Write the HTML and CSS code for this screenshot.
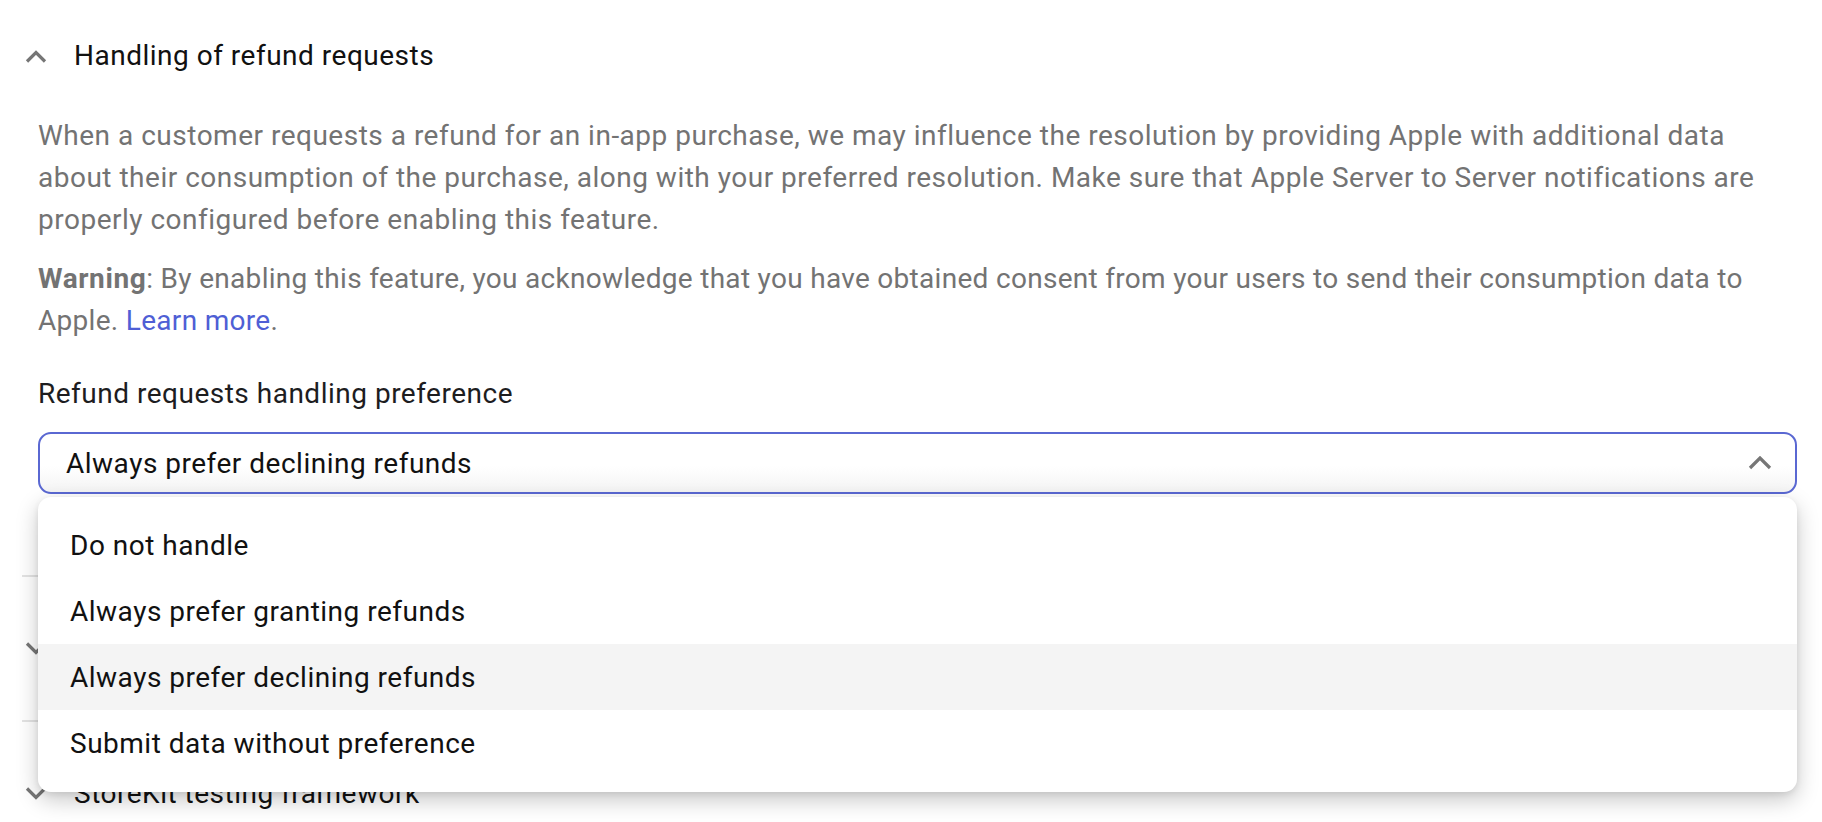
FILE: index.html
```html
<!DOCTYPE html>
<html lang="en">
<head>
<meta charset="utf-8">
<title>Refund requests</title>
<link rel="stylesheet" href="styles.css">
</head>
<body>
<div class="accordion">
  <section class="item open">
    <div class="item-header">
      <svg class="chev" width="22" height="13" viewBox="0 0 22 13"><path d="M2 11.5 L11 2.5 L20 11.5"/></svg>
      <span class="item-title">Handling of refund requests</span>
    </div>
    <div class="item-body">
      <p class="desc">When a customer requests a refund for an in-app purchase, we may influence the resolution by providing Apple with additional data about their consumption of the purchase, along with your preferred resolution. Make sure that Apple Server to Server notifications are properly configured before enabling this feature.</p>
      <p class="desc warn"><strong>Warning</strong>: By enabling this feature, you acknowledge that you have obtained consent from your users to send their consumption data to Apple. <a href="#" class="link">Learn more</a>.</p>
      <div class="field-label">Refund requests handling preference</div>
      <div class="select-wrap">
        <div class="select">
          <span>Always prefer declining refunds</span>
          <svg class="chev-sel" width="24" height="14" viewBox="0 0 24 14"><path d="M2 12 L12 2 L22 12"/></svg>
        </div>
        <ul class="menu">
          <li class="opt">Do not handle</li>
          <li class="opt">Always prefer granting refunds</li>
          <li class="opt active">Always prefer declining refunds</li>
          <li class="opt">Submit data without preference</li>
        </ul>
      </div>
    </div>
  </section>
  <section class="item">
    <div class="item-header">
      <svg class="chev" width="22" height="13" viewBox="0 0 22 13"><path d="M2 1.5 L11 10.5 L20 1.5"/></svg>
    </div>
  </section>
  <section class="item">
    <div class="item-header">
      <svg class="chev" width="22" height="13" viewBox="0 0 22 13"><path d="M2 1.5 L11 10.5 L20 1.5"/></svg>
      <span class="item-title">StoreKit testing framework</span>
    </div>
  </section>
</div>
</body>
</html>
```
FILE: styles.css
```css
html, body {
  margin: 0;
  padding: 0;
  background: #ffffff;
  overflow: hidden;
}
body {
  font-family: Roboto, "Liberation Sans", sans-serif;
  font-size: 28px;
  color: #1d1d1f;
  letter-spacing: 0.5px;
}
.accordion {
  margin-left: 22px;
  width: 1775px;
}
.item + .item {
  border-top: 2px solid #e3e3e3;
}
.item-header {
  display: flex;
  align-items: center;
  height: 143px;
  padding-left: 3px;
  gap: 27px;
}
.item.open .item-header {
  height: 112px;
}
.chev path, .chev-sel path {
  fill: none;
  stroke: #767676;
  stroke-width: 3.2;
}
.item-title {
  font-size: 28px;
  line-height: 42px;
  color: #111111;
}
.item-body {
  padding: 3px 0 81px 16px;
}
.desc {
  margin: 0;
  line-height: 42px;
  color: #737373;
  letter-spacing: 0.5px;
}
.desc.warn {
  margin-top: 17px;
  letter-spacing: 0.3px;
}
.desc strong {
  font-weight: 700;
  letter-spacing: 0.6px;
}
.link {
  color: #4f5fd5;
  text-decoration: none;
}
.field-label {
  margin-top: 31px;
  line-height: 42px;
  color: #1d1d1f;
}
.select-wrap {
  position: relative;
  margin-top: 17px;
}
.select {
  box-sizing: border-box;
  height: 62px;
  border: 2px solid #5a68d2;
  border-radius: 13px;
  padding: 0 23px 0 26px;
  display: flex;
  align-items: center;
  justify-content: space-between;
  background: linear-gradient(to bottom, #ffffff 55%, #f4f4f4 100%);
  color: #111111;
}
.menu {
  position: absolute;
  top: calc(100% + 3px);
  left: 0;
  right: 0;
  margin: 0;
  padding: 15px 0 16px;
  list-style: none;
  background: #ffffff;
  border-radius: 13px;
  box-shadow: 0 8px 22px rgba(0, 0, 0, 0.22), 0 2px 6px rgba(0, 0, 0, 0.08);
  z-index: 10;
}
.opt {
  height: 66px;
  display: flex;
  align-items: center;
  padding-left: 32px;
  color: #111111;
}
.opt.active {
  background: #f4f4f4;
}
```
